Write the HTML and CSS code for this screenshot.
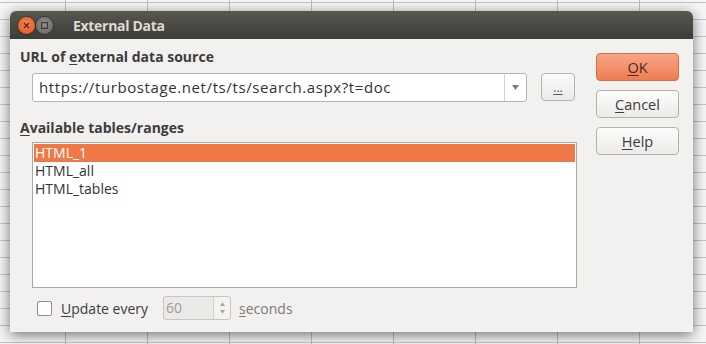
FILE: index.html
```html
<!DOCTYPE html>
<html lang="en">

<head>
    <meta charset="UTF-8">
    <title>External Data</title>
    <link rel="stylesheet" href="styles.css">
</head>

<body>
    <div class="window">
        <div class="titlebar">
            <span class="wbtn close">
                <svg width="7" height="7" viewBox="0 0 7 7"><path d="M1 1L6 6M6 1L1 6" stroke="#5a2a14" stroke-width="1.3"/></svg>
            </span>
            <span class="wbtn max">
                <svg width="7" height="7" viewBox="0 0 7 7"><rect x="0.6" y="0.6" width="5.8" height="5.8" fill="none" stroke="#3a3935" stroke-width="1.1"/></svg>
            </span>
            <span class="title">External Data</span>
        </div>
        <div class="content">
            <div class="main">
                <div class="label">URL of <u>e</u>xternal data source</div>
                <div class="url-row">
                    <div class="combo">
                        <div class="combo-text">https://turbostage.net/ts/ts/search.aspx?t=doc</div>
                        <div class="combo-arrow">
                            <svg width="7" height="5" viewBox="0 0 7 5"><path d="M0 0H7L3.5 5Z" fill="#7d7c78"/></svg>
                        </div>
                    </div>
                    <div class="browse"><u>...</u></div>
                </div>
                <div class="label label2"><u>A</u>vailable tables/ranges</div>
                <div class="list">
                    <div class="item selected">HTML_1</div>
                    <div class="item">HTML_all</div>
                    <div class="item">HTML_tables</div>
                </div>
                <div class="update-row">
                    <span class="check"></span>
                    <span class="update-label"><u>U</u>pdate every</span>
                    <div class="spin">
                        <span class="spin-value">60</span>
                        <span class="spin-btns">
                            <svg width="5" height="4" viewBox="0 0 5 4"><path d="M0 4L2.5 0L5 4Z" fill="#a9a8a4"/></svg>
                            <svg width="5" height="4" viewBox="0 0 5 4"><path d="M0 0L2.5 4L5 0Z" fill="#a9a8a4"/></svg>
                        </span>
                    </div>
                    <span class="seconds"><u>s</u>econds</span>
                </div>
            </div>
            <div class="side">
                <div class="button ok"><u>O</u>K</div>
                <div class="button"><u>C</u>ancel</div>
                <div class="button"><u>H</u>elp</div>
            </div>
        </div>
    </div>
</body>

</html>
```

FILE: styles.css
```css
body {
    margin: 0;
    width: 706px;
    height: 344px;
    overflow: hidden;
    font-family: "Open Sans", "DejaVu Sans", sans-serif;
    color: #3c3c3c;
    background-color: #f6f6f6;
    background-image:
        linear-gradient(to right, #bdbdbd 1px, transparent 1px),
        linear-gradient(to bottom, #c4c4c4 1px, transparent 1px);
    background-size: 82px 17px, 82px 17px;
    background-position: 65px 0, 0 2px;
    padding-top: 11px;
    box-sizing: border-box;
}

u {
    text-decoration-thickness: 1px;
    text-underline-offset: 2px;
}

.window {
    width: 683px;
    height: 321px;
    margin-left: 10px;
    background-color: #f2f1f0;
    border-radius: 6px 6px 0 0;
    box-shadow: 0 3px 14px rgba(0, 0, 0, 0.55);
    display: flex;
    flex-direction: column;
}

.titlebar {
    height: 28px;
    display: flex;
    align-items: center;
    padding-left: 8px;
    border-radius: 6px 6px 0 0;
    background: linear-gradient(to bottom, #57564f, #3d3c37);
}

.wbtn {
    width: 17px;
    height: 17px;
    border-radius: 50%;
    display: flex;
    align-items: center;
    justify-content: center;
    margin-right: 1px;
}

.wbtn.close {
    background: radial-gradient(circle at 50% 40%, #f78257, #e2531d);
    box-shadow: 0 0 0 1px rgba(0, 0, 0, 0.25);
}

.wbtn.max {
    background: radial-gradient(circle at 50% 40%, #8e8d88, #64635e);
    box-shadow: 0 0 0 1px rgba(0, 0, 0, 0.25);
}

.title {
    margin-left: 19px;
    font-size: 14px;
    letter-spacing: -0.3px;
    font-weight: bold;
    color: #dfdbd2;
}

.content {
    flex: 1;
    display: flex;
    padding: 0 14px 0 10px;
}

.main {
    width: 567px;
}

.label {
    font-size: 14px;
    font-weight: bold;
    line-height: 18px;
    height: 18px;
    margin-top: 9px;
    color: #3c3c3c;
}

.label2 {
    margin-top: 17px;
}

.url-row {
    display: flex;
    margin-top: 7px;
    padding-left: 12px;
}

.combo {
    width: 495px;
    height: 29px;
    box-sizing: border-box;
    display: flex;
    background-color: white;
    border: 1px solid #b6b4b0;
    border-radius: 3px;
}

.combo-text {
    flex: 1;
    font-size: 15px;
    letter-spacing: 0.6px;
    line-height: 27px;
    padding-left: 6px;
    color: #333;
}

.combo-arrow {
    width: 21px;
    border-left: 1px solid #d4d3cf;
    display: flex;
    align-items: center;
    justify-content: center;
}

.browse {
    width: 34px;
    height: 28px;
    margin-left: 14px;
    box-sizing: border-box;
    border: 1px solid #b6b4b0;
    border-radius: 4px;
    background: linear-gradient(to bottom, #fbfbfa, #ebeae8);
    display: flex;
    align-items: center;
    justify-content: center;
    font-size: 12px;
    color: #555;
}

.list {
    margin: 5px 0 0 12px;
    width: 545px;
    height: 146px;
    box-sizing: border-box;
    border: 1px solid #a9a8a4;
    background-color: white;
    padding: 1px 1px;
}

.item {
    height: 18px;
    line-height: 18px;
    font-size: 14px;
    padding-left: 1px;
    color: #333;
}

.item.selected {
    background-color: #f07746;
    color: white;
}

.update-row {
    display: flex;
    align-items: center;
    height: 24px;
    margin-top: 8px;
    padding-left: 17px;
    font-size: 14px;
}

.check {
    width: 13px;
    height: 13px;
    border: 1px solid #8f8e8a;
    border-radius: 2px;
    background-color: white;
}

.update-label {
    margin-left: 9px;
}

.spin {
    margin-left: 15px;
    width: 68px;
    height: 24px;
    box-sizing: border-box;
    border: 1px solid #c6c5c1;
    border-radius: 3px;
    background-color: #ebeae8;
    display: flex;
}

.spin-value {
    flex: 1;
    color: #9d9c98;
    line-height: 22px;
    padding-left: 2px;
}

.spin-btns {
    width: 16px;
    border-left: 1px solid #d4d3cf;
    background-color: #f4f3f2;
    border-radius: 0 3px 3px 0;
    display: flex;
    flex-direction: column;
    align-items: center;
    justify-content: center;
    gap: 4px;
}

.seconds {
    margin-left: 8px;
    color: #7b7a76;
}

.side {
    margin-left: 19px;
    padding-top: 14px;
    display: flex;
    flex-direction: column;
    gap: 9px;
}

.button {
    width: 83px;
    height: 28px;
    box-sizing: border-box;
    border: 1px solid #b3b1ac;
    border-radius: 4px;
    background: linear-gradient(to bottom, #fdfdfc, #ebeae8);
    display: flex;
    align-items: center;
    justify-content: center;
    font-size: 14.5px;
    color: #3c3c3c;
}

.button.ok {
    border-color: #d0714b;
    background: linear-gradient(to bottom, #f8a587, #f07c51);
    color: #4a2a1c;
}
```
